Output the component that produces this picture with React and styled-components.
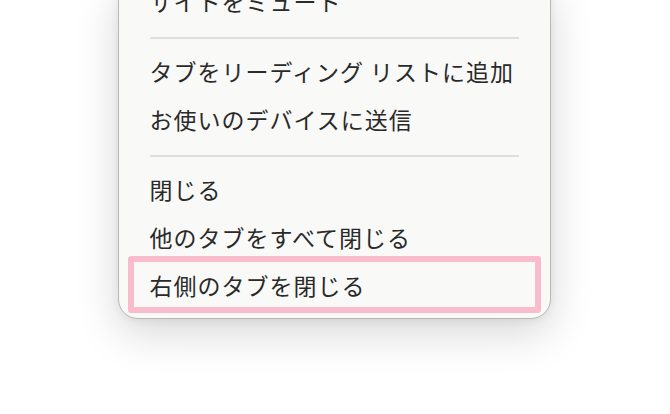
import React from 'react'
import styled, { createGlobalStyle } from 'styled-components'

const GlobalStyle = createGlobalStyle`
  html, body {
    margin: 0;
    padding: 0;
    background: #ffffff;
    overflow: hidden;
  }
`

const Stage = styled.div`
  height: 414px;
  display: flex;
  justify-content: center;
  align-items: flex-end;
  padding-bottom: 95px;
  box-sizing: border-box;
  overflow: hidden;
`

const Menu = styled.ul`
  list-style: none;
  margin: 0 2px 0 0;
  width: 433px;
  box-sizing: border-box;
  padding: 0 0 7px;
  background: #f9f9f7;
  border: 1px solid #b8b8b6;
  border-radius: 20px;
  box-shadow: 0 14px 44px rgba(0, 0, 0, 0.16), 0 2px 8px rgba(0, 0, 0, 0.06);
  font-family: "Noto Sans CJK JP", "Noto Sans", sans-serif;
  font-size: 23px;
  letter-spacing: 1px;
  color: #2a2a2a;
`

const Item = styled.li`
  position: relative;
  height: 48px;
  box-sizing: border-box;
  display: flex;
  align-items: center;
  padding: 0 31px 4px;
  white-space: nowrap;

  ${props => props.marked && `
    &::after {
      content: '';
      position: absolute;
      left: 9px;
      right: 9px;
      top: -7px;
      bottom: -2px;
      border: 6px solid #f8bccd;
      border-radius: 3px;
    }
  `}
`

const Separator = styled.li`
  height: 2px;
  margin: 10px 31px;
  background: #dededc;
`

const App = () => (
  <>
    <GlobalStyle />
    <Stage>
      <Menu>
        <Item>サイトをミュート</Item>
        <Separator />
        <Item>タブをリーディング リストに追加</Item>
        <Item>お使いのデバイスに送信</Item>
        <Separator />
        <Item>閉じる</Item>
        <Item>他のタブをすべて閉じる</Item>
        <Item marked>右側のタブを閉じる</Item>
      </Menu>
    </Stage>
  </>
)

export default App
